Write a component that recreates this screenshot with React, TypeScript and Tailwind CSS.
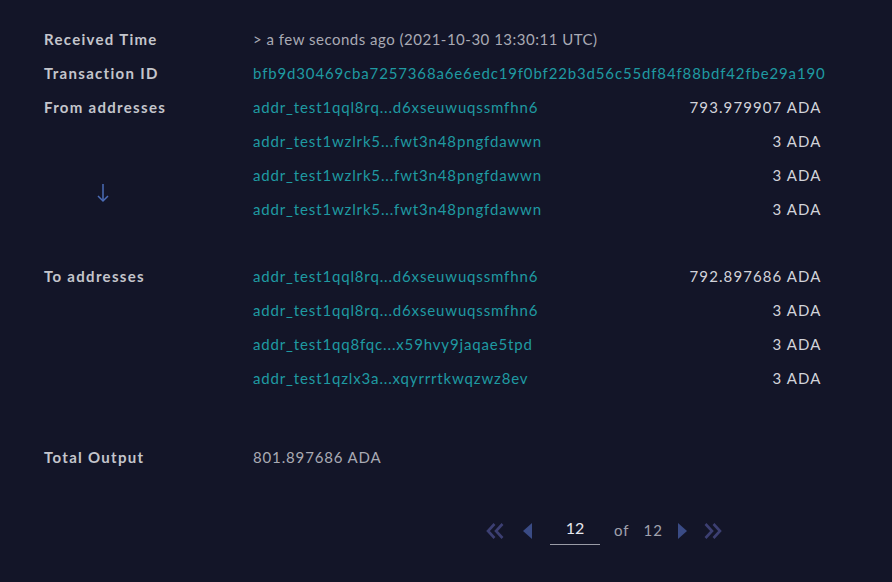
import React from 'react';

const fromRows = [
    { addr: 'addr_test1qql8rq...d6xseuwuqssmfhn6', amount: '793.979907 ADA' },
    { addr: 'addr_test1wzlrk5...fwt3n48pngfdawwn', amount: '3 ADA' },
    { addr: 'addr_test1wzlrk5...fwt3n48pngfdawwn', amount: '3 ADA' },
    { addr: 'addr_test1wzlrk5...fwt3n48pngfdawwn', amount: '3 ADA' },
];

const toRows = [
    { addr: 'addr_test1qql8rq...d6xseuwuqssmfhn6', amount: '792.897686 ADA' },
    { addr: 'addr_test1qql8rq...d6xseuwuqssmfhn6', amount: '3 ADA' },
    { addr: 'addr_test1qq8fqc...x59hvy9jaqae5tpd', amount: '3 ADA' },
    { addr: 'addr_test1qzlx3a...xqyrrrtkwqzwz8ev', amount: '3 ADA' },
];

function AddressList({ rows }: { rows: { addr: string; amount: string }[] }) {
    return (
        <div className="flex flex-col">
            {rows.map((r, i) => (
                <div key={i} className="flex h-[34px] items-center justify-between">
                    <span className="text-[#1f9aa2]">{r.addr}</span>
                    <span className="mr-[4px] text-[#d2d3da] tracking-[1.1px]">{r.amount}</span>
                </div>
            ))}
        </div>
    );
}

const label = 'h-[34px] flex items-center font-bold text-[#c4c5cc] tracking-[1.3px]';

export default function App() {
    return (
        <div
            className="w-[892px] h-[582px] bg-[#131528] pl-[44px] pr-[72px] pt-[22px] text-[15px] tracking-[0.85px]"
            style={{ fontFamily: '"Lato", "Open Sans", sans-serif' }}
        >
            {/* Info rows */}
            <div className="grid grid-cols-[209px_1fr]">
                <div className={label}>Received Time</div>
                <div className="h-[34px] flex items-center text-[#a9aab4] tracking-[0.5px]">
                    &gt; a few seconds ago (2021-10-30 13:30:11 UTC)
                </div>

                <div className={label}>Transaction ID</div>
                <div className="h-[34px] flex items-center text-[#1f9aa2] whitespace-nowrap">
                    bfb9d30469cba7257368a6e6edc19f0bf22b3d56c55df84f88bdf42fbe29a190
                </div>

                <div className="relative">
                    <div className={label}>From addresses</div>
                    <div className="absolute left-[51px] top-[93px] text-[#4b6cb7]">
                        <svg width="16" height="20" viewBox="0 0 16 20" fill="none" stroke="currentColor" strokeWidth="1.5">
                            <path d="M8 1v17" />
                            <path d="M3 13l5 5 5-5" />
                        </svg>
                    </div>
                </div>
                <AddressList rows={fromRows} />

                <div className="h-[33px]" />
                <div className="h-[33px]" />

                <div className={label}>To addresses</div>
                <AddressList rows={toRows} />

                <div className="h-[45px]" />
                <div className="h-[45px]" />

                <div className={label}>Total Output</div>
                <div className="h-[34px] flex items-center text-[#a9aab4]">801.897686 ADA</div>
            </div>

            {/* Pagination */}
            <div className="mt-[42px] flex items-center justify-center pl-[344px] text-[#a0a1ad] tracking-normal">
                <svg width="20" height="18" viewBox="0 0 20 18" className="text-[#3c3f72]" fill="none" stroke="currentColor" strokeWidth="2.6">
                    <path d="M9.5 2 3 9l6.5 7" />
                    <path d="M17.5 2 11 9l6.5 7" />
                </svg>
                <svg width="12" height="18" viewBox="0 0 12 18" className="ml-[16px] text-[#3a4b85]" fill="currentColor">
                    <path d="M11 1 2 9l9 8z" />
                </svg>
                <div className="ml-[17px] w-[50px] border-b border-[#9a9ba6] pb-[4px] text-center text-[#e6e7ee] text-[16px]">
                    12
                </div>
                <span className="ml-[14px] tracking-[1px]">of</span>
                <span className="ml-[14px] tracking-[1px]">12</span>
                <svg width="12" height="18" viewBox="0 0 12 18" className="ml-[14px] text-[#3a4b85]" fill="currentColor">
                    <path d="M1 1l9 8-9 8z" />
                </svg>
                <svg width="20" height="18" viewBox="0 0 20 18" className="ml-[14px] text-[#3c3f72]" fill="none" stroke="currentColor" strokeWidth="2.6">
                    <path d="M2.5 2 9 9l-6.5 7" />
                    <path d="M10.5 2 17 9l-6.5 7" />
                </svg>
            </div>
        </div>
    );
}
